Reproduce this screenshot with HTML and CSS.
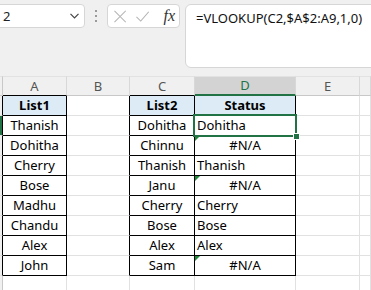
FILE: index.html
```html
<!DOCTYPE html>
<html lang="en">
<head>
    <meta charset="UTF-8">
    <title>VLOOKUP</title>
    <link rel="stylesheet" href="styles.css">
</head>
<body>

    <!-- Barra de fórmulas -->
    <div class="toolbar">
        <div class="namebox">
            <span>2</span>
            <svg class="chevron" width="9" height="6" viewBox="0 0 9 6"><path d="M0.5 0.8 L4.5 4.8 L8.5 0.8" fill="none" stroke="#444" stroke-width="1.2"/></svg>
        </div>
        <div class="grip"><i></i><i></i><i></i></div>
        <div class="fxbox">
            <svg width="13" height="13" viewBox="0 0 13 13"><path d="M0.5 0.5 L12.5 12.5 M12.5 0.5 L0.5 12.5" stroke="#b4b4b4" stroke-width="1.1" fill="none"/></svg>
            <svg width="14" height="11" viewBox="0 0 14 11"><path d="M0.5 6 L5 10.3 L13.5 0.5" stroke="#b4b4b4" stroke-width="1.1" fill="none"/></svg>
            <span class="fx">fx</span>
        </div>
        <div class="formula">=VLOOKUP(C2,$A$2:A9,1,0)</div>
    </div>

    <!-- Planilha -->
    <div class="sheet">
        <div class="hd rh"></div>
        <div class="hd top">A</div>
        <div class="hd">B</div>
        <div class="hd top">C</div>
        <div class="hd selcol">D</div>
        <div class="hd">E</div>
        <div class="hd"></div>

        <div class="rh edge"></div>
        <div class="t th">List1</div>
        <div class="edge"></div>
        <div class="t th">List2</div>
        <div class="t th">Status</div>
        <div></div>
        <div></div>

        <div class="rh edge selrow"></div>
        <div class="t">Thanish</div>
        <div class="edge"></div>
        <div class="t">Dohitha</div>
        <div class="t l sel">Dohitha</div>
        <div></div>
        <div></div>

        <div class="rh edge"></div>
        <div class="t">Dohitha</div>
        <div class="edge"></div>
        <div class="t">Chinnu</div>
        <div class="t err">#N/A</div>
        <div></div>
        <div></div>

        <div class="rh edge"></div>
        <div class="t">Cherry</div>
        <div class="edge"></div>
        <div class="t">Thanish</div>
        <div class="t l">Thanish</div>
        <div></div>
        <div></div>

        <div class="rh edge"></div>
        <div class="t">Bose</div>
        <div class="edge"></div>
        <div class="t">Janu</div>
        <div class="t err">#N/A</div>
        <div></div>
        <div></div>

        <div class="rh edge"></div>
        <div class="t">Madhu</div>
        <div class="edge"></div>
        <div class="t">Cherry</div>
        <div class="t l">Cherry</div>
        <div></div>
        <div></div>

        <div class="rh edge"></div>
        <div class="t">Chandu</div>
        <div class="edge"></div>
        <div class="t">Bose</div>
        <div class="t l">Bose</div>
        <div></div>
        <div></div>

        <div class="rh edge"></div>
        <div class="t">Alex</div>
        <div class="edge"></div>
        <div class="t">Alex</div>
        <div class="t l">Alex</div>
        <div></div>
        <div></div>

        <div class="rh edge"></div>
        <div class="t">John</div>
        <div class="edge"></div>
        <div class="t">Sam</div>
        <div class="t err">#N/A</div>
        <div></div>
        <div></div>

        <div class="rh"></div>
        <div></div>
        <div></div>
        <div></div>
        <div></div>
        <div></div>
        <div></div>
    </div>

</body>
</html>
```

FILE: styles.css
```css
body {
    margin: 0;
    background-color: #ffffff;
    font-family: "Noto Sans", "Open Sans", sans-serif;
    overflow: hidden;
}

/* barra de fórmulas */
.toolbar {
    height: 76px;
    box-sizing: border-box;
    padding-top: 4px;
    background-color: #f0f0f0;
    display: flex;
    align-items: flex-start;
}
.namebox {
    margin-left: -6px;
    width: 91px;
    height: 24px;
    box-sizing: border-box;
    padding: 0 5px 0 8px;
    background-color: #ffffff;
    border: 1px solid #d6d6d6;
    border-radius: 4px;
    display: flex;
    align-items: center;
    justify-content: space-between;
    font-size: 13px;
    color: #222;
}
.grip {
    width: 22px;
    height: 24px;
    display: flex;
    flex-direction: column;
    align-items: center;
    justify-content: center;
    gap: 3px;
}
.grip i {
    width: 2px;
    height: 2px;
    background-color: #9a9a9a;
}
.fxbox {
    width: 73px;
    height: 24px;
    box-sizing: border-box;
    padding: 0 4px 0 6px;
    background-color: #ffffff;
    border: 1px solid #d6d6d6;
    border-radius: 4px;
    display: flex;
    align-items: center;
    gap: 10px;
}
.fx {
    margin-left: 4px;
    font-family: "Liberation Serif", serif;
    font-style: italic;
    font-size: 16px;
    color: #333;
}
.formula {
    margin-left: 5px;
    flex: 1;
    margin-right: -10px;
    height: 64px;
    box-sizing: border-box;
    padding: 3px 0 0 10px;
    background-color: #ffffff;
    border: 1px solid #d6d6d6;
    border-radius: 6px;
    font-size: 13px;
    line-height: 20px;
    color: #111;
}

/* grade da planilha */
.sheet {
    display: grid;
    grid-template-columns: 3px 64px 63px 65px 101px 64px 1fr;
    grid-auto-rows: 20px;
    font-size: 13px;
    color: #000;
}
.sheet div {
    box-sizing: border-box;
    border-right: 1px solid #e1e1e1;
    border-bottom: 1px solid #e1e1e1;
    display: flex;
    align-items: flex-end;
    justify-content: center;
    padding-bottom: 1px;
    line-height: 17px;
    white-space: nowrap;
    position: relative;
}
.sheet .hd {
    background-color: #f0f0f0;
    color: #555;
    border-top: 1px solid #e2e2e2;
    border-right-color: #d8d8d8;
    border-bottom-color: #c8c8c8;
    align-items: center;
    padding-bottom: 0;
}
.sheet .rh {
    background-color: #f0f0f0;
    border-right-color: #c8c8c8;
}
.sheet .hd.top {
    border-bottom-color: #000;
}
.sheet .hd.selcol {
    background-color: #d3d3d3;
    color: #217346;
    border-bottom: 2px solid #217346;
}
.sheet .edge {
    border-right-color: #000;
}
.sheet .selrow {
    background-color: #217346;
}
.sheet .t {
    border-right-color: #000;
    border-bottom-color: #000;
}
.sheet .th {
    background-color: #ddebf7;
    font-weight: bold;
}
.sheet .l {
    justify-content: flex-start;
    padding-left: 2px;
}
.sheet .err::before {
    content: "";
    position: absolute;
    top: 0;
    left: 0;
    border-top: 5px solid #1e8a3a;
    border-right: 5px solid transparent;
}
.sheet .sel {
    z-index: 2;
}
.sheet .sel::before {
    content: "";
    position: absolute;
    top: -2px;
    left: -2px;
    right: -2px;
    bottom: -2px;
    border: 2px solid #217346;
}
.sheet .sel::after {
    content: "";
    position: absolute;
    right: -5px;
    bottom: -5px;
    width: 5px;
    height: 5px;
    background-color: #217346;
    border: 1px solid #ffffff;
}
```
